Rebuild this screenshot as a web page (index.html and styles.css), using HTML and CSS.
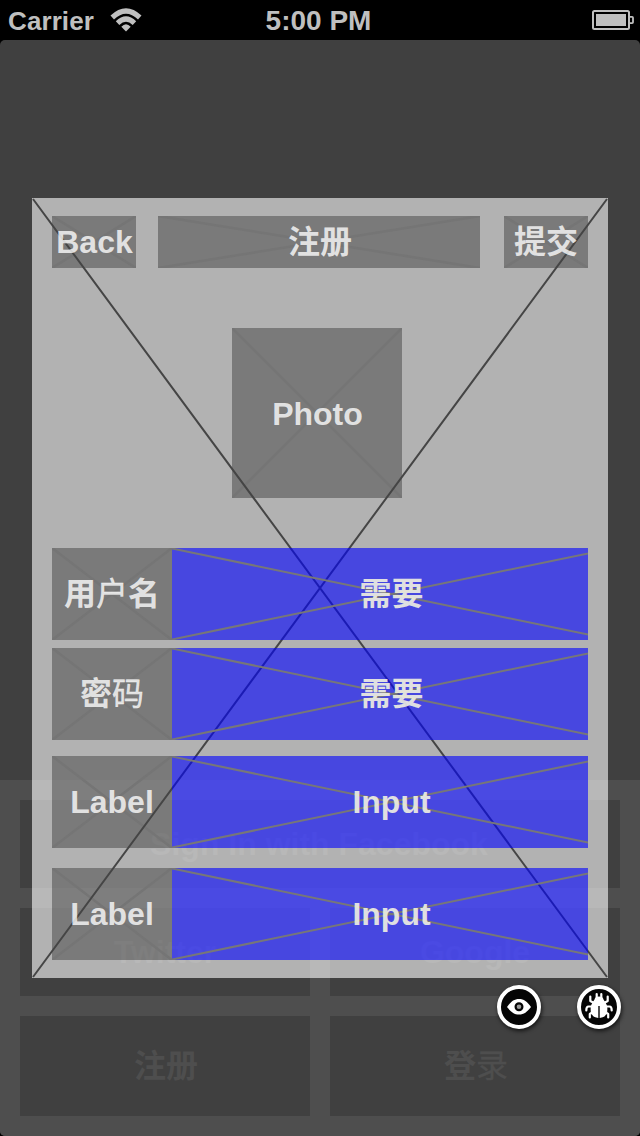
FILE: index.html
```html
<!DOCTYPE html>
<html lang="zh-CN">
<head>
<meta charset="utf-8">
<title>注册</title>
<link rel="stylesheet" href="styles.css">
</head>
<body>
<header class="status">
  <div class="carrier"><span>Carrier</span>
    <svg class="wifi" width="32" height="24" viewBox="0 0 32 24"><path d="M.5 7.500Q16-7.200 31.500 7.500L28 11.500Q16 .2 4 11.500Z"/><path d="M5.800 13.300Q16 3.400 26.200 13.300L22.700 17Q16 10.500 9.300 17Z"/><path d="M11.300 18.800Q16 13.800 20.700 18.800L16 23.500Z"/></svg>
  </div>
  <div class="clock">5:00 PM</div>
  <svg class="battery" width="42" height="20" viewBox="0 0 42 20"><rect x="1" y="1" width="36" height="18" rx="1.5" fill="none" stroke="#bfbfbf" stroke-width="2"/><rect x="4" y="4" width="30" height="12"/><path d="M38 6.900h2.100q.9 0 .9.900v4.400q0 .9-.9.900H38" fill="none" stroke="#bfbfbf" stroke-width="1.800"/></svg>
</header>
<main class="screen">
  <section class="sheet">
    <div class="choice wide"><span>Sign In with Facebook</span></div>
    <div class="choice"><span>Twitter</span></div>
    <div class="choice"><span>Google</span></div>
    <div class="choice"><span class="cjk">注册</span></div>
    <div class="choice"><span class="cjk">登<i>录</i></span></div>
  </section>
</main>
<section class="modal">
  <svg class="modal-cross" viewBox="0 0 576 780"><path d="M1 1L575 779M575 1L1 779"/></svg>
  <div class="nav">
    <div class="box back"><svg class="cross" viewBox="0 0 84 52"><path d="M0 0L84 52M84 0L0 52"/></svg><span class="text">Back</span></div>
    <div class="box title"><svg class="cross" viewBox="0 0 322 52"><path d="M0 0L322 52M322 0L0 52"/></svg><span class="text cjk">注册</span></div>
    <div class="box submit"><svg class="cross" viewBox="0 0 84 52"><path d="M0 0L84 52M84 0L0 52"/></svg><span class="text cjk">提交</span></div>
  </div>
  <div class="box photo"><svg class="cross" viewBox="0 0 170 170"><path d="M0 0L170 170M170 0L0 170"/></svg><span class="text">Photo</span></div>
  <div class="fields">
    <div class="field">
      <div class="box label"><svg class="cross" viewBox="0 0 120 92"><path d="M0 0L120 92M120 0L0 92"/></svg><span class="text cjk">用<i>户</i>名</span></div>
      <div class="input"><svg class="input-cross" viewBox="0 0 440 92"><path d="M0 .5L440 91.500M440 .5L0 91.500"/></svg><span class="text cjk">需要</span></div>
    </div>
    <div class="field second">
      <div class="box label"><svg class="cross" viewBox="0 0 120 92"><path d="M0 0L120 92M120 0L0 92"/></svg><span class="text cjk">密<i>码</i></span></div>
      <div class="input"><svg class="input-cross" viewBox="0 0 440 92"><path d="M0 .5L440 91.500M440 .5L0 91.500"/></svg><span class="text cjk">需要</span></div>
    </div>
    <div class="field third">
      <div class="box label"><svg class="cross" viewBox="0 0 120 92"><path d="M0 0L120 92M120 0L0 92"/></svg><span class="text">Label</span></div>
      <div class="input"><svg class="input-cross" viewBox="0 0 440 92"><path d="M0 .5L440 91.500M440 .5L0 91.500"/></svg><span class="text">Input</span></div>
    </div>
    <div class="field fourth">
      <div class="box label"><svg class="cross" viewBox="0 0 120 92"><path d="M0 0L120 92M120 0L0 92"/></svg><span class="text">Label</span></div>
      <div class="input"><svg class="input-cross" viewBox="0 0 440 92"><path d="M0 .5L440 91.500M440 .5L0 91.500"/></svg><span class="text">Input</span></div>
    </div>
  </div>
</section>
<div class="tools">
  <div class="tool"><svg width="36" height="36" viewBox="0 0 36 36"><path d="M6 18C10 12.500 13 10 18 10S26 12.500 30 18C26 23 23 25.500 18 25.500S10 23 6 18Z" fill="#fff"/><circle cx="18" cy="17.700" r="3.400" fill="#999" stroke="#050505" stroke-width="2.200"/></svg></div>
  <div class="tool"><svg width="36" height="36" viewBox="0 0 36 36"><path d="M17.300 17v12Q11 28.500 9.800 23Q9 17.500 11.500 13.500L13.500 10.500Q14 7.500 18 7.500T22.500 10.500L24.500 13.500Q27 17.500 26.200 23Q25 28.500 18.700 29V17Z" fill="#fff"/><g fill="none" stroke="#fff" stroke-width="2.200" stroke-linecap="round" stroke-linejoin="round"><path d="M15.700 9V5M20.300 9V5M13 14L9.300 12V7.500M23 14L26.700 12V7.500M11 17.500H7.500Q5.300 17.500 5.300 21.500M25 17.500H28.500Q30.700 17.500 30.700 21.500M12 23L8.800 25V28.500M24 23L27.200 25V28.500"/></g></svg></div>
</div>
</body>
</html>
```
FILE: styles.css
```css
* { box-sizing: border-box; }
body {
  margin: 0;
  width: 640px;
  height: 1136px;
  position: relative;
  overflow: hidden;
  background: #000;
  font: bold 32px/38px "Liberation Sans", "Noto Sans CJK SC", sans-serif;
}
.cjk { font-family: "Noto Sans CJK SC", sans-serif; padding-bottom: 6px; }
.cjk i { font-style: normal; font-weight: 400; -webkit-text-stroke: .35px; }
svg { display: block; }
.status {
  height: 40px;
  display: grid;
  grid-template-columns: 1fr auto 1fr;
  align-items: center;
  padding: 0 6px 2px 8px;
  color: #bfbfbf;
  fill: #bfbfbf;
  font-size: 28px;
}
.carrier { display: flex; align-items: center; gap: 16px; font-size: 26px; }
.carrier span { letter-spacing: .1px; padding-top: 2px; }
.wifi { margin-bottom: 1px; }
.clock { padding: 2px 5px 0 0; }
.battery { justify-self: end; }
.screen {
  height: 1096px;
  display: flex;
  align-items: flex-end;
  background: #404040;
  border-radius: 5px;
  overflow: hidden;
}
.sheet {
  width: 640px;
  height: 356px;
  padding: 20px;
  display: grid;
  grid-template-columns: 290px 290px;
  grid-template-rows: 88px 88px 100px;
  gap: 20px;
  background: #4e4e4e;
  color: #4e4e4e;
}
.choice { display: flex; align-items: center; justify-content: center; background: #404040; }
.choice .cjk { padding-left: 2px; }
.wide { grid-column: 1 / 3; padding-right: 2px; }
.modal {
  position: absolute;
  left: 32px;
  top: 198px;
  width: 576px;
  height: 780px;
  padding: 18px 20px;
  background: rgba(255, 255, 255, .6);
}
.modal-cross { position: absolute; inset: 0; z-index: 1; stroke: #454545; stroke-width: 2; }
.nav { display: flex; height: 52px; }
.box {
  display: grid;
  align-items: center;
  justify-items: center;
  background: rgba(0, 0, 0, .315);
}
.box > *, .input > * { grid-area: 1 / 1; }
.cross { width: 100%; height: 100%; stroke: #757575; stroke-width: 2.5; }
.text { position: relative; z-index: 3; color: rgba(255, 255, 255, .8); white-space: nowrap; }
.back { width: 84px; margin-right: 22px; }
.back .text { padding-left: 1px; }
.title { width: 322px; margin-right: 24px; }
.title .text { padding-left: 2px; }
.submit { width: 84px; }
.photo { width: 170px; height: 170px; margin: 60px 0 50px 180px; }
.photo .text { padding: 2px 0 0 1px; }
.field { display: flex; height: 92px; }
.second { margin-top: 8px; }
.third { margin-top: 16px; }
.fourth { margin-top: 20px; }
.label { width: 120px; }
.input {
  position: relative;
  z-index: 2;
  width: 416px;
  overflow: hidden;
  display: grid;
  grid-template-columns: 440px;
  align-items: center;
  justify-items: center;
  background: rgba(0, 0, 255, .6);
}
.input .text { color: rgba(245, 245, 226, .88); padding-right: 1px; }
.input-cross { width: 440px; height: 92px; stroke: #777778; stroke-width: 2; }
.tools { position: absolute; left: 497px; top: 985px; display: flex; gap: 36px; z-index: 4; }
.tool {
  width: 44px;
  height: 44px;
  border: 4px solid #fff;
  border-radius: 50%;
  background: #050505;
  box-shadow: 1px 2px 4px rgba(0, 0, 0, .7);
}
```
